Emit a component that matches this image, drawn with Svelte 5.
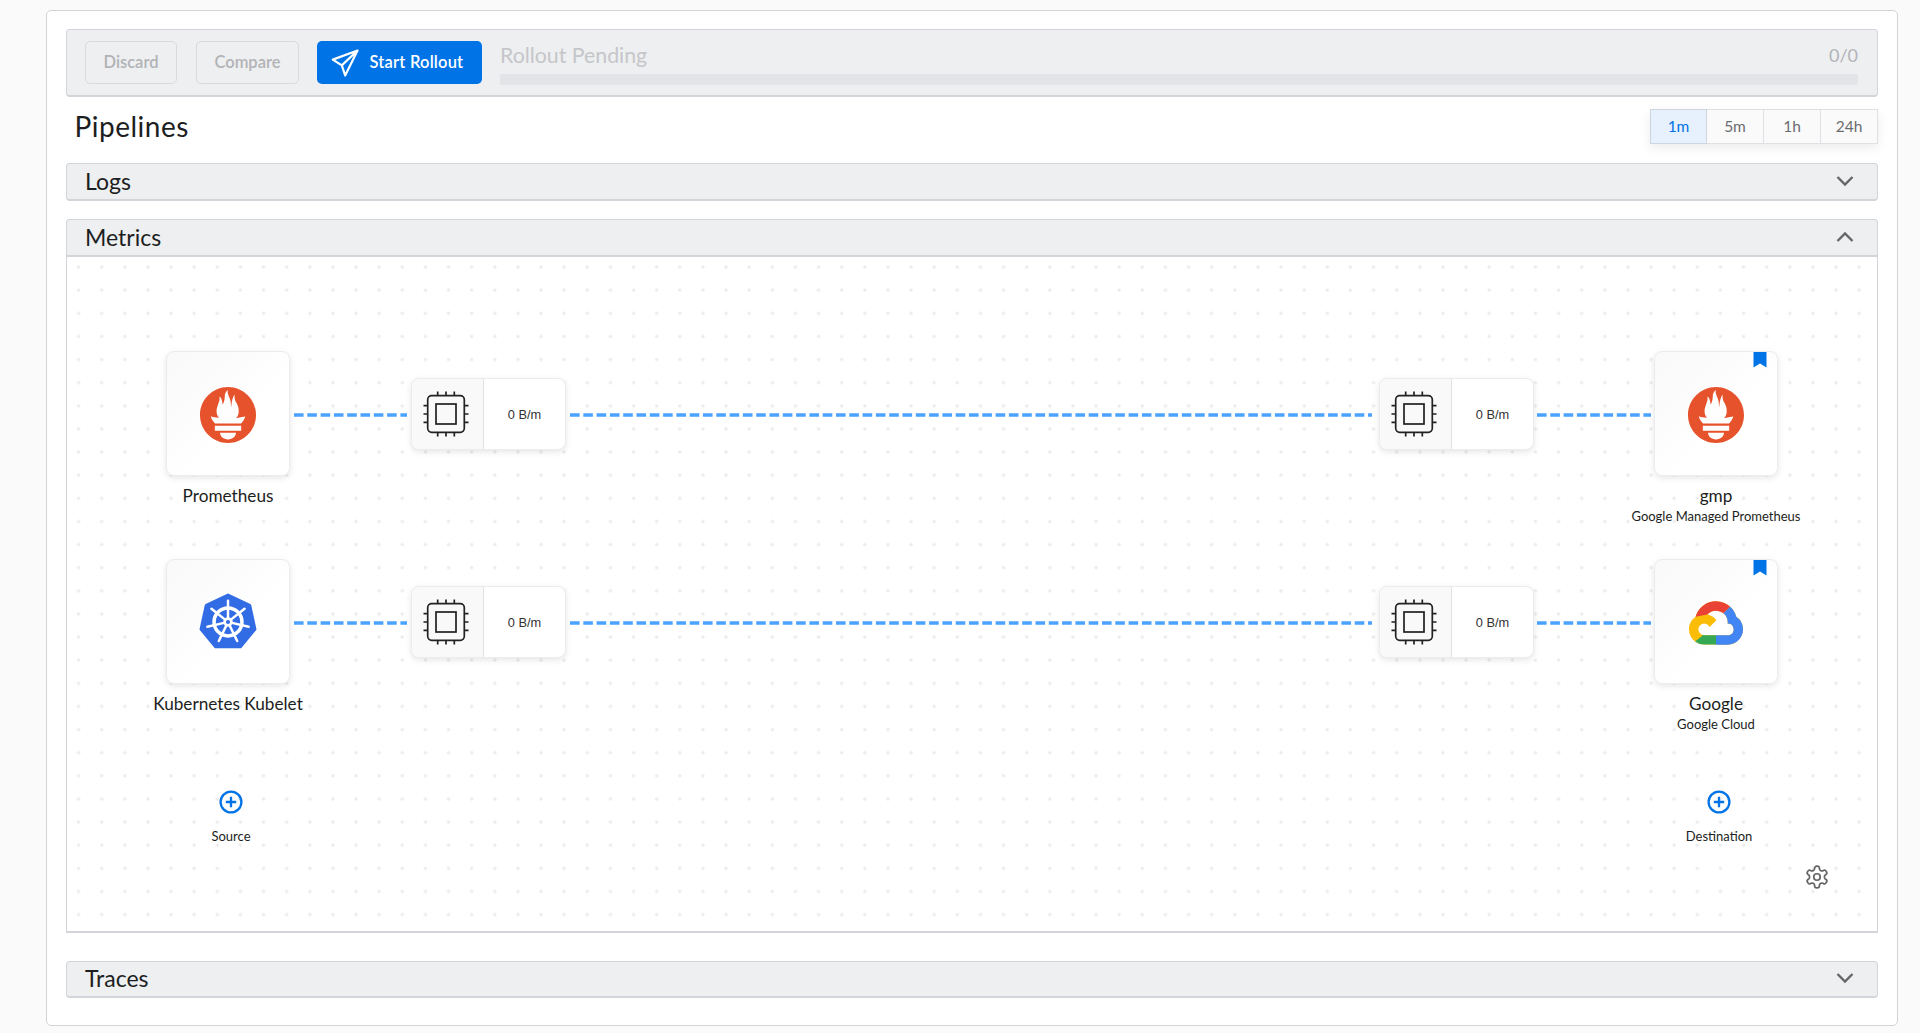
<script>
  const times = ['1m', '5m', '1h', '24h'];
  const rows = [
    { top: 351, icon: 'prom', dest: 'gmp', sub: 'Google Managed Prometheus', src: 'Prometheus', destIcon: 'prom' },
    { top: 559, icon: 'kube', dest: 'Google', sub: 'Google Cloud', src: 'Kubernetes Kubelet', destIcon: 'gcp' }
  ];
  const promPath = 'M12 0C5.373 0 0 5.372 0 11.999c0 6.627 5.373 12 12 12s12-5.373 12-12C24 5.372 18.627 0 12 0zm0 22.459c-1.885 0-3.414-1.26-3.414-2.814h6.828c0 1.553-1.528 2.814-3.414 2.814zm5.64-3.745H6.36V16.66h11.28v2.054zm-.04-3.112H6.391c-.037-.043-.075-.086-.111-.13-1.155-1.401-1.427-2.133-1.691-2.879-.005-.025 1.4.287 2.395.511 0 0 .513.119 1.262.255-.72-.843-1.147-1.915-1.147-3.01 0-2.406 1.845-4.508 1.18-6.207.648.053 1.34 1.367 1.387 3.422.689-.951.977-2.69.977-3.755 0-1.103.727-2.385 1.454-2.429-.648 1.069.168 1.984.894 4.256.272.854.237 2.29.447 3.201.07-1.892.395-4.652 1.595-5.605-.53 1.2.078 2.702.494 3.424.671 1.166 1.078 2.049 1.078 3.72 0 1.12-.413 2.175-1.11 3.0.792-.149 1.339-.283 1.339-.283l2.573-.502s-.374 1.538-1.81 3.019z';
  const gcpPath = 'M12.19 2.38a9.344 9.344 0 0 0-9.234 6.893c.053-.02-.055.013 0 0-3.875 2.551-3.922 8.11-.247 10.941l.006-.007-.007.03a6.717 6.717 0 0 0 4.077 1.356h5.173l.03.03h5.192c6.687.053 9.376-8.605 3.835-12.35a9.365 9.365 0 0 0-2.821-4.552l-.043.043.006-.05A9.344 9.344 0 0 0 12.19 2.38zm-.358 4.146c1.244-.04 2.518.368 3.486 1.15a5.186 5.186 0 0 1 1.862 4.078v.518c3.53-.07 3.53 5.262 0 5.193h-5.193l-.008.009v-.04H6.785a2.59 2.59 0 0 1-1.067-.23h.001a2.597 2.597 0 1 1 3.437-3.437l3.013-3.012A6.747 6.747 0 0 0 8.11 8.24c.018-.01.04-.026.054-.023l-.008.005a4.917 4.917 0 0 1 3.677-1.696z';
  const spokes = [0, 51.43, 102.86, 154.29, 205.71, 257.14, 308.57];
  const pins = [14.7, 23, 31.3];
</script>

{#snippet chevron(up)}
  <svg class="chev" width="20" height="12" viewBox="0 0 20 12" aria-hidden="true">
    <path d={up ? 'M2.5 10L10 2.5L17.5 10' : 'M2.5 2L10 9.5L17.5 2'} />
  </svg>
{/snippet}

{#snippet accordion(title, up)}
  <div class="acc-head">
    <span>{title}</span>
    {@render chevron(up)}
  </div>
{/snippet}

{#snippet cpu()}
  <svg class="cpu" width="46" height="46" viewBox="0 0 46 46" aria-hidden="true">
    <rect x="4.7" y="4.7" width="36.6" height="36.6" rx="4" />
    <rect x="13" y="13" width="20" height="20" />
    {#each pins as p}
      <path d="M{p} 0.5V4.7M{p} 41.3V45.5M0.5 {p}H4.7M41.3 {p}H45.5" />
    {/each}
  </svg>
{/snippet}

{#snippet logo(kind)}
  {#if kind === 'prom'}
    <svg width="56" height="56" viewBox="0 0 24 24" aria-hidden="true"><path fill="#e6522c" d={promPath} /></svg>
  {:else if kind === 'kube'}
    <svg width="62" height="62" viewBox="0 0 60 60" aria-hidden="true">
      <polygon class="hept" points="30,3 51,13 56,36 42,53 18,53 4,36 9,13" />
      <g transform="translate(30 29)">
        <circle r="13.5" class="ring" />
        {#each spokes as a}
          <line y1="-4" y2="-20.5" class="spoke" transform="rotate({a})" />
        {/each}
        <circle r="4.6" fill="#fff" />
        <circle r="2" fill="#326ce5" />
      </g>
    </svg>
  {:else}
    <svg width="54" height="54" viewBox="0 0 24 24" aria-hidden="true">
      <defs><clipPath id="gcpc"><path d={gcpPath} /></clipPath></defs>
      <g clip-path="url(#gcpc)">
        <rect width="24" height="24" fill="#fbbc05" />
        <polygon fill="#ea4335" points="0,0 23,0 15.32,7.68 8.11,8.24 2.956,9.27 0,9.9" />
        <polygon fill="#4285f4" points="23,0 25,0 25,24 12,24 12,15 15.32,7.68" />
        <polygon fill="#34a853" points="12,15 12,24 0,24 0,22.3 5.718,17.87 6.5,15" />
      </g>
    </svg>
  {/if}
{/snippet}

{#snippet addBtn(label, cls)}
  <div class="add {cls}">
    <svg width="24" height="24" viewBox="0 0 24 24" aria-hidden="true">
      <circle cx="12" cy="12" r="10.4" /><path d="M12 6.8V17.2M6.8 12H17.2" />
    </svg>
    <span>{label}</span>
  </div>
{/snippet}

<div class="page">
  <main class="card">
    <section class="toolbar">
      <button class="ghost discard">Discard</button>
      <button class="ghost compare">Compare</button>
      <button class="primary">
        <svg width="28" height="28" viewBox="0 0 28 28" aria-hidden="true">
          <path d="M26.5 1.5L1.8 10.6L10.8 16.4L14.2 26.5ZM26.5 1.5L10.8 16.4" />
        </svg>
        <span>Start Rollout</span>
      </button>
      <div class="progress">
        <div class="progress-text"><span>Rollout Pending</span><span class="count">0/0</span></div>
        <div class="bar"></div>
      </div>
    </section>

    <div class="title-row">
      <h1>Pipelines</h1>
      <div class="times">
        {#each times as t, i}
          <button class:active={i === 0}>{t}</button>
        {/each}
      </div>
    </div>

    <section class="acc logs">{@render accordion('Logs', false)}</section>

    <section class="acc metrics">
      {@render accordion('Metrics', true)}
      <div class="canvas">
        <svg class="edges" width="1810" height="676" aria-hidden="true">
          {#each rows as r}
            {@const y = r.top + 64 - 257}
            <path d="M227 {y}H340M503 {y}H1305M1470 {y}H1584" />
          {/each}
        </svg>

        {#each rows as r}
          <div class="node src" style="top:{r.top - 257}px">
            <div class="tile">{@render logo(r.icon)}</div>
            <div class="name">{r.src}</div>
          </div>

          <div class="proc p1" style="top:{r.top + 27 - 257}px">
            <div class="proc-ic">{@render cpu()}</div><div class="proc-val">0 B/m</div>
          </div>
          <div class="proc p2" style="top:{r.top + 27 - 257}px">
            <div class="proc-ic">{@render cpu()}</div><div class="proc-val">0 B/m</div>
          </div>

          <div class="node dst" style="top:{r.top - 257}px">
            <div class="tile">
              <svg class="mark" width="14" height="16" viewBox="0 0 14 16" aria-hidden="true"><path d="M0.5 0H13.5V15.5L7 11.5L0.5 15.5Z" /></svg>
              {@render logo(r.destIcon)}
            </div>
            <div class="name">{r.dest}</div>
            <div class="sub">{r.sub}</div>
          </div>
        {/each}

        {@render addBtn('Source', 'a-src')}
        {@render addBtn('Destination', 'a-dst')}

        <svg class="gear" width="26" height="26" viewBox="0 0 24 24" aria-hidden="true">
          <path d="M12.22 2h-.44a2 2 0 0 0-2 2v.18a2 2 0 0 1-1 1.73l-.43.25a2 2 0 0 1-2 0l-.15-.08a2 2 0 0 0-2.73.73l-.22.38a2 2 0 0 0 .73 2.73l.15.1a2 2 0 0 1 1 1.72v.51a2 2 0 0 1-1 1.74l-.15.09a2 2 0 0 0-.73 2.73l.22.38a2 2 0 0 0 2.73.73l.15-.08a2 2 0 0 1 2 0l.43.25a2 2 0 0 1 1 1.73V20a2 2 0 0 0 2 2h.44a2 2 0 0 0 2-2v-.18a2 2 0 0 1 1-1.73l.43-.25a2 2 0 0 1 2 0l.15.08a2 2 0 0 0 2.73-.73l.22-.39a2 2 0 0 0-.73-2.73l-.15-.08a2 2 0 0 1-1-1.74v-.5a2 2 0 0 1 1-1.74l.15-.09a2 2 0 0 0 .73-2.73l-.22-.38a2 2 0 0 0-2.73-.73l-.15.08a2 2 0 0 1-2 0l-.43-.25a2 2 0 0 1-1-1.73V4a2 2 0 0 0-2-2z" />
          <circle cx="12" cy="12" r="3" />
        </svg>
      </div>
    </section>

    <section class="acc traces">{@render accordion('Traces', false)}</section>
  </main>
</div>

<style>
  :global(body) {
    margin: 0;
    background: #fafafa;
    color: #1c1e21;
    font-family: "Lato", "Open Sans", sans-serif;
  }
  .page {
    height: 1033px;
    box-sizing: border-box;
    padding: 10px 22px 0 46px;
    overflow: hidden;
  }
  .card {
    box-sizing: border-box;
    height: 1016px;
    background: #fff;
    border: 1px solid #d2d4da;
    border-radius: 5px;
    padding: 18px 19px 0;
  }
  .toolbar {
    box-sizing: border-box;
    height: 68px;
    display: flex;
    align-items: flex-start;
    padding: 11px 19px 0 18px;
    background: #eeeff1;
    border: 1px solid #d2d4da;
    border-bottom-width: 2px;
    border-radius: 4px;
  }
  button {
    font-family: inherit;
    cursor: pointer;
  }
  .ghost, .primary {
    box-sizing: border-box;
    height: 43px;
    border-radius: 5px;
    font-size: 16.5px;
    font-weight: 600;
    margin-right: 18px;
    padding: 0 0 2px;
  }
  .ghost {
    background: transparent;
    border: 1px solid #d9dadd;
    color: #b2b3b6;
  }
  .discard { width: 92px; margin-right: 19px; }
  .compare { width: 103px; }
  .primary {
    width: 165px;
    display: flex;
    align-items: center;
    gap: 10.5px;
    padding: 0 0 0 14px;
    background: #0073e6;
    border: none;
    color: #fff;
    letter-spacing: 0.2px;
  }
  .primary span {
    margin-top: -2px;
  }
  .primary svg path {
    fill: none;
    stroke: #fff;
    stroke-width: 2.2;
    stroke-linejoin: round;
  }
  .progress {
    flex: 1;
    margin-top: -4px;
  }
  .progress-text {
    display: flex;
    justify-content: space-between;
    align-items: center;
    height: 36.5px;
    font-size: 21.3px;
    color: #c5c6c9;
  }
  .count {
    font-size: 18px;
    color: #b2b3b6;
  }
  .bar {
    height: 11px;
    border-radius: 2px;
    background: #e3e4e7;
  }
  .title-row {
    display: flex;
    justify-content: space-between;
    align-items: flex-start;
    height: 66px;
    box-sizing: border-box;
    padding-top: 12px;
  }
  h1 {
    margin: -1px 0 0;
    padding-left: 8.5px;
    font-size: 28px;
    font-weight: 400;
    line-height: 36px;
    letter-spacing: 0.5px;
  }
  .times {
    display: flex;
    height: 35px;
    box-shadow: 0 4px 10px rgba(0, 0, 0, 0.08);
  }
  .times button {
    box-sizing: border-box;
    width: 57px;
    background: #fafafa;
    border: 1px solid #dfe0e4;
    border-left-width: 0;
    color: #6b6c6f;
    font-size: 15.5px;
    padding: 0 0 2px;
  }
  .times button:first-child {
    border-left-width: 1px;
  }
  .times button.active {
    background: #e6f1fd;
    color: #0073e6;
    border-color: #ccd5e0;
  }
  .acc-head {
    box-sizing: border-box;
    height: 38px;
    display: flex;
    align-items: center;
    justify-content: space-between;
    padding: 0 22px 2px 18px;
    background: #eeeff1;
    border: 1px solid #d2d4da;
    border-bottom-width: 2px;
    border-radius: 4px;
    font-size: 23px;
  }
  .traces .acc-head {
    height: 37px;
  }
  .logs {
    margin-bottom: 18px;
  }
  .metrics .acc-head {
    border-radius: 4px 4px 0 0;
  }
  .chev {
    fill: none;
    stroke: #666;
    stroke-width: 2.4;
  }
  .canvas {
    position: relative;
    box-sizing: border-box;
    height: 676px;
    margin-bottom: 28px;
    border: 1px solid #d2d4da;
    border-top: none;
    border-bottom-width: 2px;
    background-color: #fff;
    background-image: radial-gradient(circle, #ededee 1.5px, transparent 1.6px);
    background-size: 23.14px 23.14px;
    background-position: 0 -1.5px;
  }
  .edges {
    position: absolute;
    left: 0;
    top: 0;
    fill: none;
    stroke: #4ba3ff;
    stroke-width: 3.4;
    stroke-dasharray: 9.6 3.7;
  }
  .node {
    position: absolute;
    width: 200px;
    display: flex;
    flex-direction: column;
    align-items: center;
  }
  .src { left: 61px; }
  .dst { left: 1549px; }
  .tile {
    position: relative;
    box-sizing: border-box;
    width: 124px;
    height: 125px;
    padding-top: 2px;
    display: flex;
    align-items: center;
    justify-content: center;
    background: linear-gradient(135deg, #f9f9f9, #fff 60%);
    border: 1px solid #ececee;
    border-radius: 8px;
    box-shadow: 0 2px 6px rgba(0, 0, 0, 0.1);
  }
  .mark {
    position: absolute;
    top: 0;
    right: 10px;
    fill: #0073e6;
  }
  .name {
    margin-top: 7.5px;
    height: 24px;
    line-height: 24px;
    font-size: 17.2px;
    white-space: nowrap;
  }
  .sub {
    font-size: 13px;
    line-height: 17px;
    white-space: nowrap;
  }
  .proc {
    position: absolute;
    box-sizing: border-box;
    width: 155px;
    height: 72px;
    display: flex;
    background: #fff;
    border: 1px solid #ececee;
    border-radius: 8px;
    box-shadow: 0 2px 6px rgba(0, 0, 0, 0.1);
  }
  .p1 { left: 344px; }
  .p2 { left: 1312px; }
  .proc-ic {
    box-sizing: border-box;
    width: 72px;
    padding-right: 3px;
    display: flex;
    align-items: center;
    justify-content: center;
    background: #f9f9f9;
    border-right: 1px solid #e2e2e4;
    border-radius: 8px 0 0 8px;
  }
  .proc-val {
    flex: 1;
    display: flex;
    align-items: center;
    justify-content: center;
    font-family: "Liberation Sans", Arial, sans-serif;
    font-size: 12.8px;
    color: #333;
  }
  .cpu {
    fill: none;
    stroke: #222;
    stroke-width: 1.7;
  }
  .hept {
    fill: #326ce5;
    stroke: #326ce5;
    stroke-width: 3;
    stroke-linejoin: round;
  }
  .ring {
    fill: none;
    stroke: #fff;
    stroke-width: 3.4;
  }
  .spoke {
    stroke: #fff;
    stroke-width: 2.4;
    stroke-linecap: round;
  }
  .add {
    position: absolute;
    top: 533px;
    width: 120px;
    display: flex;
    flex-direction: column;
    align-items: center;
    gap: 14px;
    font-size: 13px;
  }
  .add svg {
    fill: none;
    stroke: #0073e6;
    stroke-width: 2.3;
  }
  .a-src { left: 104px; }
  .a-dst { left: 1592px; }
  .gear {
    position: absolute;
    left: 1737px;
    top: 607px;
    fill: none;
    stroke: #666;
    stroke-width: 1.6;
  }
</style>
